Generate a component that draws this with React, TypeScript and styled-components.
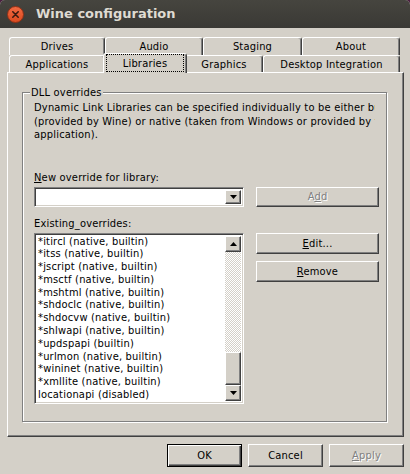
import React from 'react';
import styled, { createGlobalStyle, css } from 'styled-components';

const FONT = `"DejaVu Sans Condensed", "DejaVu Sans", sans-serif`;

const Global = createGlobalStyle`
  html, body { margin: 0; padding: 0; background: #4a2040; }
  body { width: 410px; height: 474px; overflow: hidden; }
`;

const raised = css`
  border: 1px solid;
  border-color: #fff #404040 #404040 #fff;
  box-shadow: inset -1px -1px #808080;
`;

const sunken = css`
  border: 1px solid;
  border-color: #808080 #fff #fff #808080;
  box-shadow: inset 1px 1px #404040, inset -1px -1px #d4d0c8;
`;

const Window = styled.div`
  width: 410px;
  height: 474px;
  display: flex;
  flex-direction: column;
  background: #d4d0c8;
  font-family: ${FONT};
  font-size: 11px;
  letter-spacing: 0.2px;
  color: #000;
  border-radius: 5px 5px 0 0;
  overflow: hidden;
`;

const TitleBar = styled.div`
  height: 28px;
  flex: none;
  display: flex;
  align-items: center;
  gap: 12px;
  padding-left: 7px;
  background: linear-gradient(#46453f, #3a3935);
`;

const Title = styled.span`
  font-family: "DejaVu Sans", sans-serif;
  font-weight: bold;
  font-size: 13px;
  letter-spacing: 0;
  color: #dfdbd2;
  padding-bottom: 1px;
`;

const Client = styled.div`
  flex: 1;
  display: flex;
  flex-direction: column;
  padding: 9px 0 0 7px;
`;

const TabStrip = styled.div`
  display: flex;
  flex-direction: column;
  padding-left: 2px;
`;

const TabRow = styled.div<{ $h: number }>`
  display: flex;
  align-items: flex-end;
  height: ${(p) => p.$h}px;
`;

const Tab = styled.div<{ $w: number; $h: number; $selected?: boolean }>`
  box-sizing: border-box;
  flex: none;
  width: ${(p) => p.$w}px;
  height: ${(p) => p.$h}px;
  border: 1px solid;
  border-color: #fff #404040 transparent #fff;
  border-bottom: none;
  border-radius: 3px 3px 0 0;
  box-shadow: inset -1px 0 #808080;
  background: #d4d0c8;
  display: flex;
  align-items: center;
  justify-content: center;
  ${(p) =>
    p.$selected &&
    css`
      width: ${p.$w + 4}px;
      height: ${p.$h + 3}px;
      margin: 0 -2px -1px;
      padding: 0 2px 1px 2px;
      position: relative;
      z-index: 1;
    `}
`;

const Focus = styled.span`
  flex: 1;
  align-self: stretch;
  display: flex;
  align-items: center;
  justify-content: center;
  border: 1px dotted #000;
`;

const Panel = styled.div`
  box-sizing: border-box;
  width: 397px;
  height: 365px;
  ${raised}
  padding: 19px 0 0 14px;
`;

const GroupBox = styled.div`
  position: relative;
  box-sizing: border-box;
  width: 365px;
  height: 330px;
  border: 1px solid #808080;
  box-shadow: 1px 1px 0 #fff, inset 1px 1px 0 #fff;
  padding: 8px 0 0 11px;
`;

const Legend = styled.span`
  position: absolute;
  left: 7px;
  top: -7px;
  padding: 0 1px;
  line-height: 13px;
  background: #d4d0c8;
`;

const Description = styled.div`
  width: 341px;
  overflow: hidden;
  white-space: nowrap;
  line-height: 13.5px;
`;

const Grid = styled.div`
  display: grid;
  grid-template-columns: 210px 123px;
  column-gap: 12px;
  margin-top: 29px;
`;

const Label = styled.div<{ $mt?: number }>`
  grid-column: 1 / 3;
  line-height: 13px;
  margin-top: ${(p) => p.$mt ?? 0}px;
  margin-bottom: 3px;
`;

const Combo = styled.div`
  box-sizing: border-box;
  height: 20px;
  ${sunken}
  background: #fff;
  display: flex;
  justify-content: flex-end;
  padding: 2px;
`;

const DropButton = styled.div`
  box-sizing: border-box;
  width: 16px;
  height: 100%;
  background: #d4d0c8;
  ${raised}
  display: flex;
  align-items: center;
  justify-content: center;
`;

const Button = styled.button<{ $w: number; $h: number; $default?: boolean; $disabled?: boolean }>`
  box-sizing: border-box;
  width: ${(p) => p.$w}px;
  height: ${(p) => p.$h}px;
  margin: 0;
  padding: 0;
  font: inherit;
  letter-spacing: inherit;
  background: #d4d0c8;
  ${raised}
  color: ${(p) => (p.$disabled ? '#808080' : '#000')};
  text-shadow: ${(p) => (p.$disabled ? '1px 1px 0 #fff' : 'none')};
  ${(p) =>
    p.$default &&
    css`
      border-color: #000;
      box-shadow: inset 1px 1px #fff, inset -1px -1px #404040, inset -2px -2px #808080;
    `}
`;

const ListBox = styled.div`
  box-sizing: border-box;
  height: 171px;
  ${sunken}
  background: #fff;
  padding: 2px;
  display: flex;
  overflow: hidden;
`;

const Items = styled.div`
  flex: 1;
  overflow: hidden;
  padding-left: 1px;
`;

const Item = styled.div`
  line-height: 12.8px;
  white-space: nowrap;
`;

const ScrollBar = styled.div`
  width: 16px;
  flex: none;
  display: flex;
  flex-direction: column;
`;

const ScrollButton = styled.div`
  box-sizing: border-box;
  height: 16px;
  flex: none;
  background: #d4d0c8;
  ${raised}
  display: flex;
  align-items: center;
  justify-content: center;
`;

const Track = styled.div`
  flex: 1;
  display: flex;
  flex-direction: column;
  justify-content: flex-end;
  background-image: repeating-conic-gradient(#fff 0 25%, #d4d0c8 0 50%);
  background-size: 2px 2px;
`;

const Thumb = styled.div`
  box-sizing: border-box;
  height: 33px;
  background: #d4d0c8;
  ${raised}
`;

const SideButtons = styled.div`
  display: flex;
  flex-direction: column;
  gap: 7px;
`;

const Footer = styled.div`
  display: flex;
  justify-content: flex-end;
  gap: 6px;
  padding: 7px 6px 0 0;
`;

const Arrow = ({ up }: { up?: boolean }) => (
  <svg width="7" height="4" viewBox="0 0 7 4">
    <path d={up ? 'M3.5 0 L7 4 L0 4 Z' : 'M0 0 L7 0 L3.5 4 Z'} fill="#000" />
  </svg>
);

const CloseIcon = () => (
  <svg width="17" height="17" viewBox="0 0 17 17">
    <defs>
      <linearGradient id="cg" x1="0" y1="0" x2="0" y2="1">
        <stop offset="0" stopColor="#f26a42" />
        <stop offset="1" stopColor="#db4a1f" />
      </linearGradient>
    </defs>
    <circle cx="8.5" cy="8.5" r="8" fill="url(#cg)" stroke="#8e3117" strokeWidth="1" />
    <path d="M5.8 5.8 L11.2 11.2 M11.2 5.8 L5.8 11.2" stroke="#3a1a10" strokeWidth="1.6" strokeLinecap="round" />
  </svg>
);

const items = [
  '*itircl (native, builtin)',
  '*itss (native, builtin)',
  '*jscript (native, builtin)',
  '*msctf (native, builtin)',
  '*mshtml (native, builtin)',
  '*shdoclc (native, builtin)',
  '*shdocvw (native, builtin)',
  '*shlwapi (native, builtin)',
  '*updspapi (builtin)',
  '*urlmon (native, builtin)',
  '*wininet (native, builtin)',
  '*xmllite (native, builtin)',
  'locationapi (disabled)',
];

export default function App() {
  return (
    <>
      <Global />
      <Window>
        <TitleBar>
          <CloseIcon />
          <Title>Wine configuration</Title>
        </TitleBar>
        <Client>
          <TabStrip>
            <TabRow $h={18}>
              <Tab $w={96} $h={18}>Drives</Tab>
              <Tab $w={98} $h={18}>Audio</Tab>
              <Tab $w={99} $h={18}>Staging</Tab>
              <Tab $w={98} $h={18}>About</Tab>
            </TabRow>
            <TabRow $h={17}>
              <Tab $w={96} $h={17}>Applications</Tab>
              <Tab $w={80} $h={17} $selected>
                <Focus>Libraries</Focus>
              </Tab>
              <Tab $w={78} $h={17}>Graphics</Tab>
              <Tab $w={137} $h={17}>Desktop Integration</Tab>
            </TabRow>
          </TabStrip>
          <Panel>
            <GroupBox>
              <Legend>DLL overrides</Legend>
              <Description>
                Dynamic Link Libraries can be specified individually to be either builtin
                <br />
                (provided by Wine) or native (taken from Windows or provided by the
                <br />
                application).
              </Description>
              <Grid>
                <Label>
                  <u>N</u>ew override for library:
                </Label>
                <Combo>
                  <DropButton>
                    <Arrow />
                  </DropButton>
                </Combo>
                <Button $w={123} $h={20} $disabled>
                  A<u>d</u>d
                </Button>
                <Label $mt={10}>Existing_overrides:</Label>
                <ListBox>
                  <Items>
                    {items.map((t) => (
                      <Item key={t}>{t}</Item>
                    ))}
                  </Items>
                  <ScrollBar>
                    <ScrollButton>
                      <Arrow up />
                    </ScrollButton>
                    <Track>
                      <Thumb />
                    </Track>
                    <ScrollButton>
                      <Arrow />
                    </ScrollButton>
                  </ScrollBar>
                </ListBox>
                <SideButtons>
                  <Button $w={123} $h={21}>
                    <u>E</u>dit...
                  </Button>
                  <Button $w={123} $h={21}>
                    <u>R</u>emove
                  </Button>
                </SideButtons>
              </Grid>
            </GroupBox>
          </Panel>
          <Footer>
            <Button $w={75} $h={23} $default>
              OK
            </Button>
            <Button $w={75} $h={23}>
              Cancel
            </Button>
            <Button $w={75} $h={23} $disabled>
              <u>A</u>pply
            </Button>
          </Footer>
        </Client>
      </Window>
    </>
  );
}
